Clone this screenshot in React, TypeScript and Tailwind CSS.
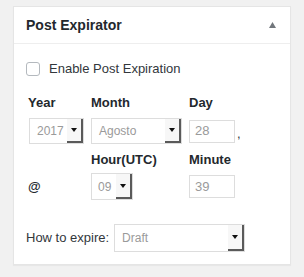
import React from "react";

const font = { fontFamily: '"Liberation Sans", Arial, sans-serif' };

function Arrow() {
  return (
    <svg width="6" height="4" viewBox="0 0 6 4" className="block">
      <polygon points="0,0 6,0 3,4" fill="#111" />
    </svg>
  );
}

function FakeSelect({ value, w, h, pad }: { value: string; w: string; h: string; pad: string }) {
  return (
    <div className={`flex ${w} ${h} border border-[#dddddd] bg-white`}>
      <div className={`flex flex-1 items-center overflow-hidden ${pad} text-[12px] text-[#9a9a9a]`}>{value}</div>
      <div className="flex w-[16px] items-center justify-center border-r-2 border-b-2 border-[#5a5a5a] bg-[#f7f7f7]">
        <Arrow />
      </div>
    </div>
  );
}

function FakeInput({ value }: { value: string }) {
  return (
    <div className="flex h-[23px] w-[46px] items-center border border-[#dddddd] bg-white pl-[5px] text-[13px] text-[#9a9a9a]">
      {value}
    </div>
  );
}

export default function App() {
  return (
    <div className="h-[277px] w-[304px] bg-[#f1f1f1] pt-[6px] pl-[13px]" style={font}>
      <div className="h-[259px] w-[278px] border border-[#e5e5e5] bg-white shadow-[0_1px_1px_rgba(0,0,0,0.04)]">
        <div className="flex h-[37px] items-center justify-between border-b border-[#eeeeee] pl-[12px] pr-[14px]">
          <span className="text-[14px] font-bold text-[#23282d]">Post Expirator</span>
          <svg width="7" height="6" viewBox="0 0 7 6" className="block">
            <polygon points="3.5,0 7,6 0,6" fill="#72777c" />
          </svg>
        </div>
        <div className="pl-[12px] pt-[15px] text-[#32373c]">
          <div className="flex h-[20px] items-center">
            <div className="h-[14px] w-[14px] rounded-[3px] border border-[#b4b9be] bg-white" />
            <span className="ml-[9px] text-[13px] text-[#32373c]">Enable Post Expiration</span>
          </div>

          <div className="mt-[15px] ml-[2px] grid grid-cols-[63px_98px_60px]">
            <div className="flex h-[18px] items-center text-[13px] font-bold text-[#23282d]">Year</div>
            <div className="flex h-[18px] items-center text-[13px] font-bold text-[#23282d]">Month</div>
            <div className="flex h-[18px] items-center text-[13px] font-bold text-[#23282d]">Day</div>

            <div className="mt-[6px] pl-[1px]">
              <FakeSelect value="2017" w="w-[55px]" h="h-[26px]" pad="pl-[7px]" />
            </div>
            <div className="mt-[6px]">
              <FakeSelect value="Agosto" w="w-[91px]" h="h-[26px]" pad="pl-[7px]" />
            </div>
            <div className="mt-[6px] flex h-[26px] items-center">
              <FakeInput value="28" />
              <span className="ml-[2px] mt-[6px] text-[13px] text-[#32373c]">,</span>
            </div>

            <div />
            <div className="mt-[7px] flex h-[18px] items-center text-[13px] font-bold text-[#23282d]">Hour(UTC)</div>
            <div className="mt-[7px] flex h-[18px] items-center text-[13px] font-bold text-[#23282d]">Minute</div>

            <div className="mt-[4px] flex h-[27px] items-center text-[13px] font-bold text-[#23282d]">@</div>
            <div className="mt-[4px]">
              <FakeSelect value="09" w="w-[42px]" h="h-[27px]" pad="pl-[6px]" />
            </div>
            <div className="mt-[4px] flex h-[27px] items-center">
              <FakeInput value="39" />
            </div>
          </div>

          <div className="mt-[24px] flex items-center">
            <span className="text-[13px] text-[#32373c]">How to expire:</span>
            <div className="ml-[5px]">
              <FakeSelect value="Draft" w="w-[131px]" h="h-[28px]" pad="pl-[7px]" />
            </div>
          </div>
        </div>
      </div>
    </div>
  );
}
